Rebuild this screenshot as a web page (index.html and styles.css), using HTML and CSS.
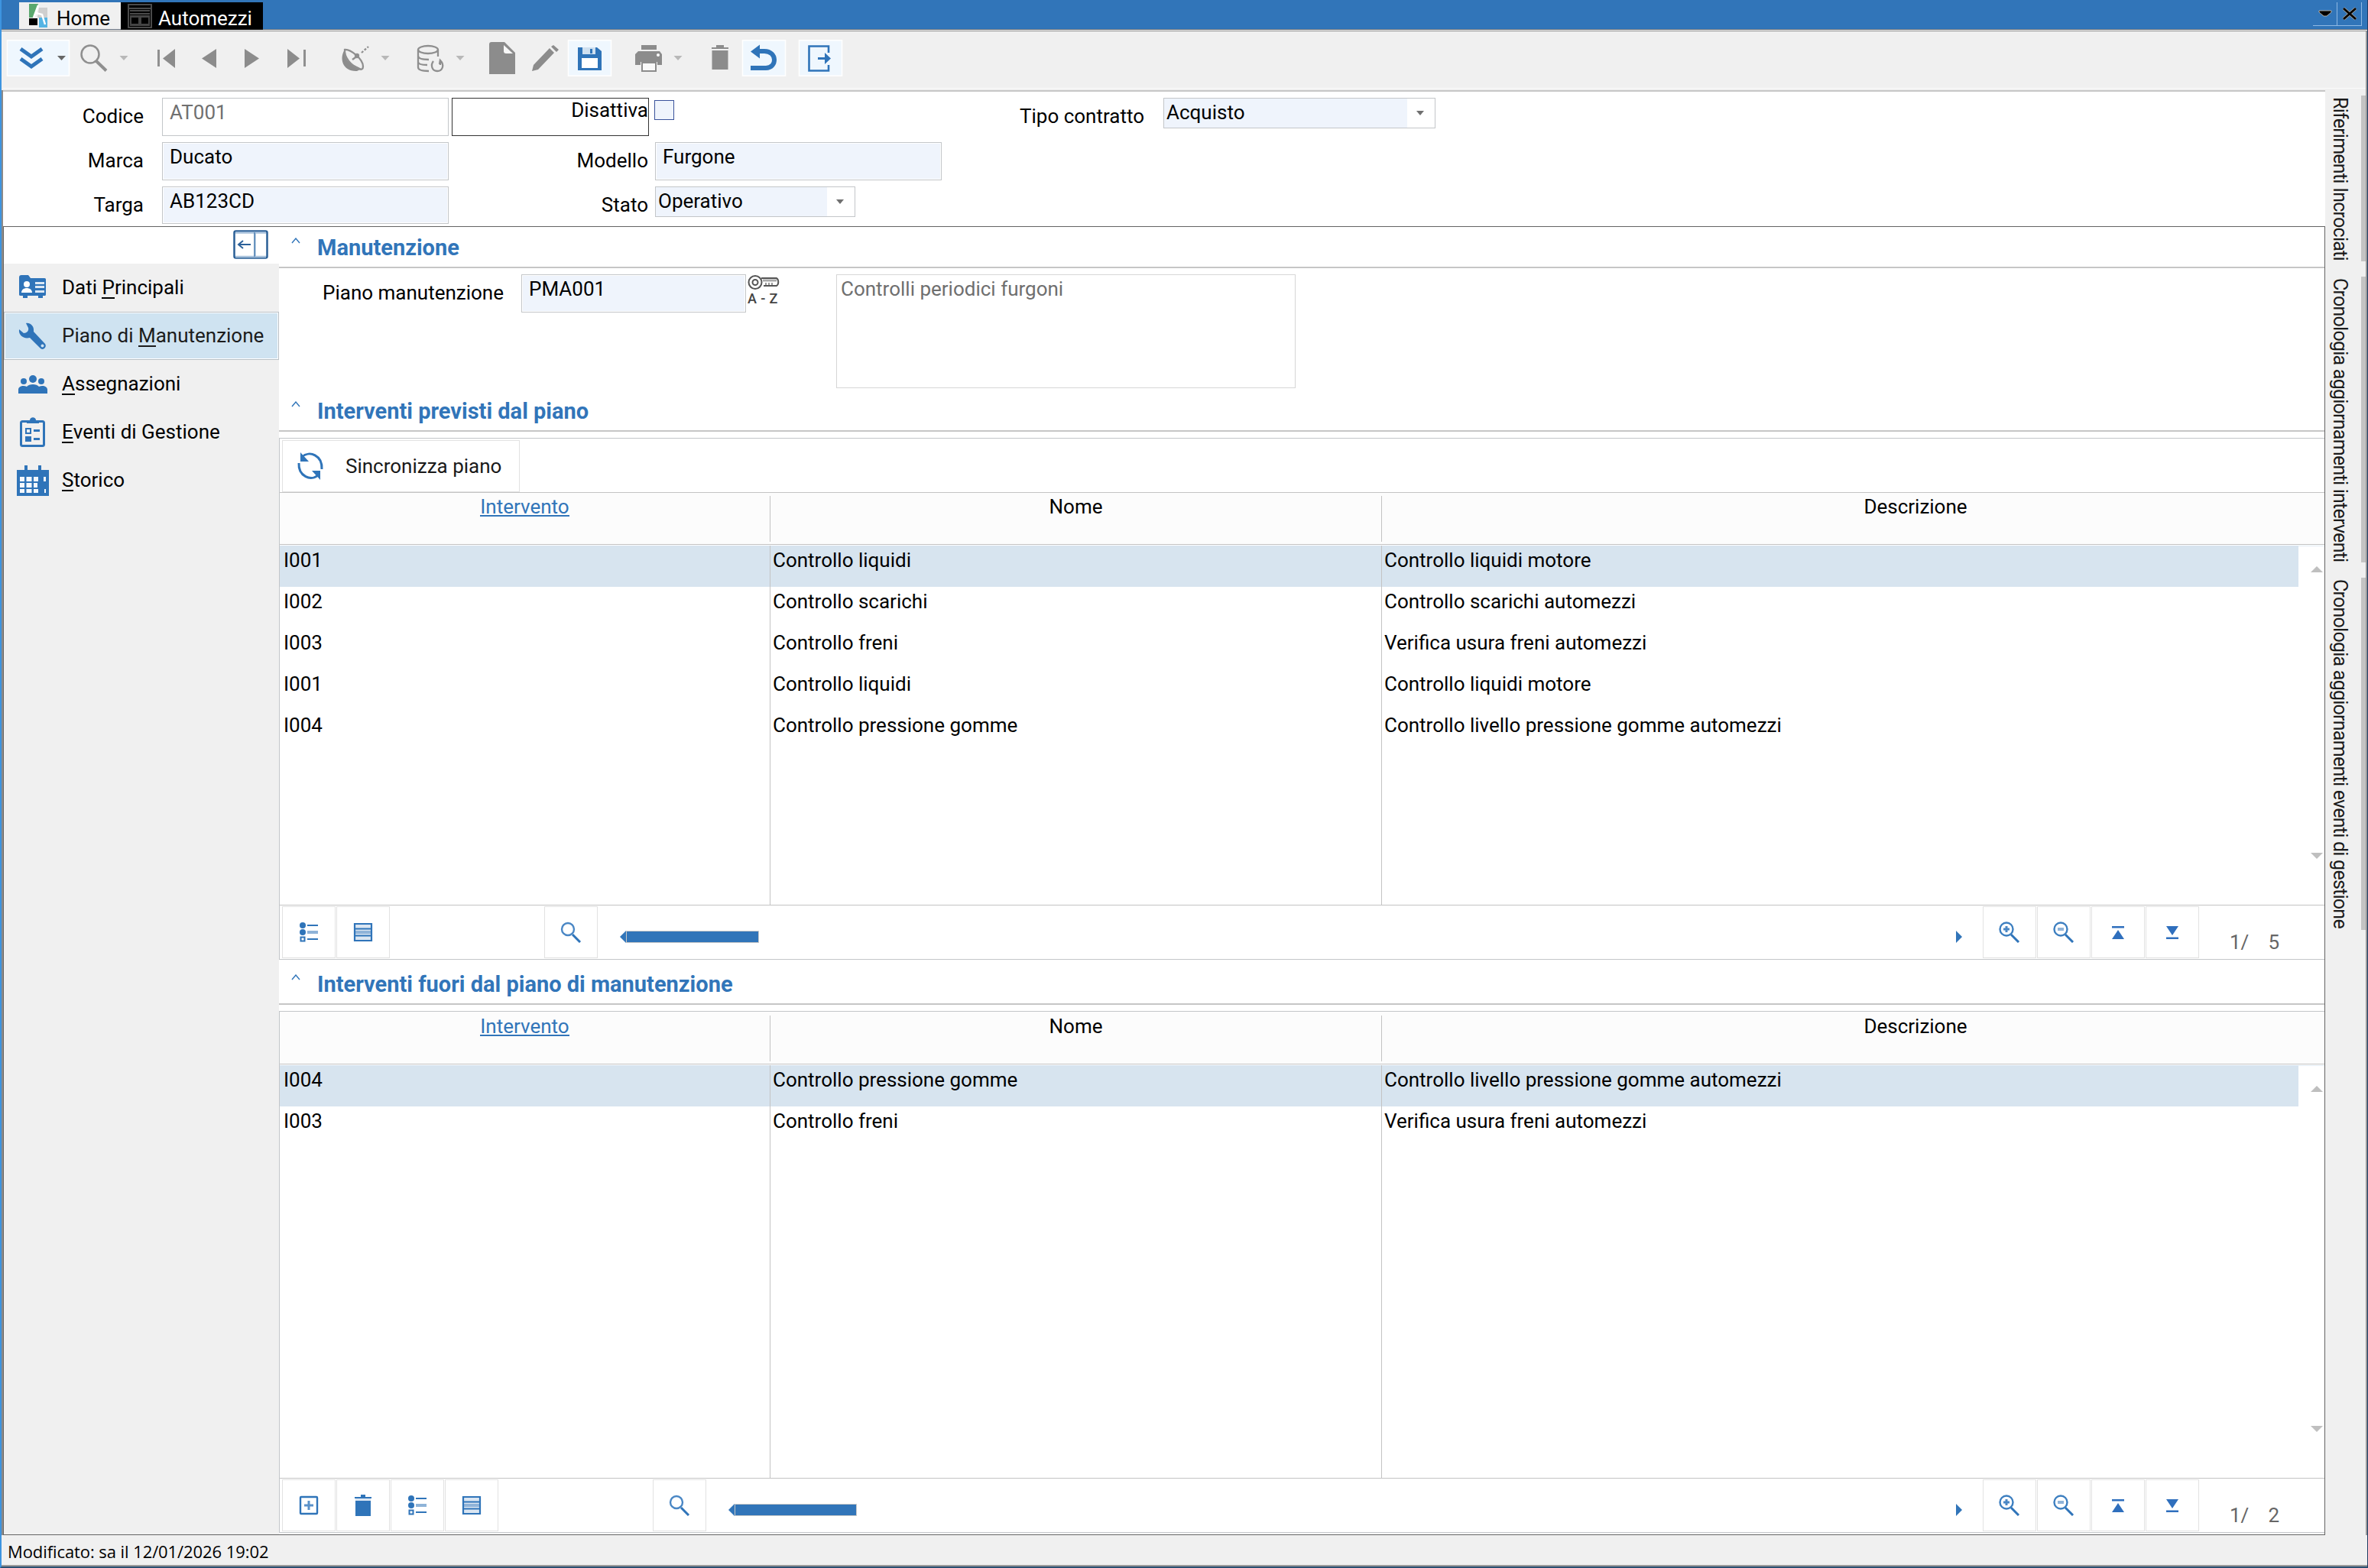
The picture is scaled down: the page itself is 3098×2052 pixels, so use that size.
FILE: index.html
```html
<!DOCTYPE html>
<html lang="it">
<head>
    <meta charset="UTF-8">
    <meta name="viewport" content="width=device-width, initial-scale=1.0">
    <title>Automezzi</title>
    <link rel="stylesheet" href="styles.css">
</head>
<body>
    <!-- Shared icons -->
    <svg class="sprite" width="0" height="0">
        <symbol id="i-list" viewBox="0 0 24 28">
            <g fill="#2f74b9"><circle cx="4" cy="5" r="4"/><circle cx="4" cy="14" r="4"/><path d="M10 4h14v2H10zM10 22h14v2H10z"/></g>
            <path d="M10 12h14v4H10z" fill="#8fb3d8"/>
            <rect x="1.5" y="20.5" width="5" height="5" fill="#fff" stroke="#2f74b9" stroke-width="2"/>
        </symbol>
        <symbol id="i-table" viewBox="0 0 26 26">
            <path d="M2 2h22v22H2z" fill="#dbe6f2"/>
            <path d="M2 11h22v4H2z" fill="#8fb3d8"/>
            <path d="M2 2h22v22H2zM2 8.5h22M2 17.5h22" fill="none" stroke="#2f74b9" stroke-width="2.2"/>
        </symbol>
        <symbol id="i-find" viewBox="0 0 28 28">
            <circle cx="10" cy="10" r="8" fill="none" stroke="#4a87c5" stroke-width="2.4"/>
            <path d="M16 17l10 10" stroke="#2f74b9" stroke-width="3"/>
        </symbol>
        <symbol id="i-zoomin" viewBox="0 0 28 28">
            <circle cx="10" cy="10" r="8.5" fill="none" stroke="#3d7fc0" stroke-width="2.4"/>
            <path d="M16 17l10 10" stroke="#2f74b9" stroke-width="3"/>
            <path d="M6 10h8M10 6v8" stroke="#4a87c5" stroke-width="3"/>
        </symbol>
        <symbol id="i-zoomout" viewBox="0 0 28 28">
            <circle cx="10" cy="10" r="8.5" fill="none" stroke="#3d7fc0" stroke-width="2.4"/>
            <path d="M16 17l10 10" stroke="#2f74b9" stroke-width="3"/>
            <path d="M6 10h8" stroke="#8fb3d8" stroke-width="4"/>
        </symbol>
        <symbol id="i-top" viewBox="0 0 16 17">
            <path d="M0 0h16v2.5H0zM8 5l8 12H0z" fill="#2f6fbd"/>
        </symbol>
        <symbol id="i-bottom" viewBox="0 0 16 17">
            <path d="M0 14.5h16V17H0zM0 0h16L8 12z" fill="#2f6fbd"/>
        </symbol>
        <symbol id="i-caret" viewBox="0 0 12 8">
            <path d="M1 7l5-6 5 6" fill="none" stroke="#2f74b9" stroke-width="1.4"/>
        </symbol>
    </svg>

    <div class="window">
        <!-- Tabs -->
        <div class="titlebar">
            <div class="tab">
                <svg class="tab-logo" width="24" height="31" viewBox="0 0 24 31">
                    <path d="M0 0h12L7 18H0z" fill="#5aa86e"/>
                    <path d="M13 5h11v13H11z" fill="#cfcfcf"/>
                    <path d="M0 19h11v9H0z" fill="#000"/>
                    <path d="M13 18h11v13H13z" fill="#55b4e4"/>
                    <path d="M6 18L12 2M9 12l8 2 4 13" fill="none" stroke="#fff" stroke-width="2.5"/>
                </svg>
                <span>Home</span>
            </div>
            <div class="tab tab-active">
                <svg width="32" height="32" viewBox="0 0 32 32">
                    <path d="M1 1h30v30H1zM1 6h30M3 9h26M3 13h26" fill="none" stroke="#4a4a4a" stroke-width="2"/>
                    <path d="M3 15h26v14H3z" fill="#444"/>
                    <path d="M5 18h9v8H5zM18 18h9v8h-9z" fill="#000"/>
                </svg>
                <span>Automezzi</span>
            </div>
            <div class="window-buttons">
                <span class="window-button">
                    <svg width="18" height="10" viewBox="0 0 18 10"><path d="M1 1h16v2l-6 5H7L1 3z" fill="#000" stroke="#d8c8b0" stroke-width=".8"/></svg>
                </span>
                <span class="window-button">
                    <svg width="20" height="18" viewBox="0 0 20 18"><path d="M2 2l16 14M18 2L2 16" stroke="#b9ab98" stroke-width="4"/><path d="M2 2l16 14M18 2L2 16" stroke="#000" stroke-width="2.8"/></svg>
                </span>
            </div>
        </div>

        <!-- Main toolbar -->
        <div class="toolbar">
            <svg width="1120" height="48" viewBox="0 0 1120 48">
                <g fill="#eff7fe" stroke="#fff" stroke-width="1.5">
                    <path d="M9.5.7h81v46.6h-81zM743.5.7h56v46.6h-56zM971.5.7h56v46.6h-56zM1045.5.7h56v46.6h-56z"/>
                </g>
                <g fill="none" stroke="#2f74b9" stroke-width="5">
                    <path d="M27 12l14 10 14-10M27 25l14 10 14-10"/>
                </g>
                <path d="M75 21h11l-5.500 6z" fill="#666"/>
                <path d="M156.500 21h11l-5.500 6zM498.500 21h11l-5.500 6zM596.500 21h11l-5.500 6zM881.500 21h11l-5.500 6z" fill="#b8b8b8"/>
                <g fill="none" stroke="#8f8f8f" stroke-width="2.5">
                    <circle cx="118" cy="19" r="11.500"/>
                    <path d="M126 28l13 12.500" stroke-width="4"/>
                    <path d="M207.500 13v22M398.500 13v22" stroke-width="3"/>
                </g>
                <g fill="#8c8c8c">
                    <path d="M229 12v25l-16-12.500zM283 12v25l-19-12.500zM320 12v25l19-12.500zM376 12v25l16-12.500z"/>
                    <!-- satellite dish -->
                    <path d="M451 13c-8 12-2 29 16 28l6-3-14-7c-6-4-9-10-8-18z"/>
                </g>
                <g fill="none" stroke="#8f8f8f" stroke-width="2.300">
                    <path d="M451 13c7-1 24 12 24 22 0 3-2 5-5 3-11-4-20-15-19-25z"/>
                    <path d="M461 26l7-5"/>
                    <path d="M473 17l9-8" stroke-dasharray="3 2"/>
                    <circle cx="467" cy="21" r="2" fill="#8f8f8f"/>
                    <!-- database -->
                    <ellipse cx="560" cy="13" rx="13" ry="5"/>
                    <path d="M547 13v23c0 3 5 5 14 5M573 13v9M547 21c0 3 4 5 14 5M547 29c0 3 4 4 12 4"/>
                    <path d="M567 28c-4 5-2 13 5 13s10-8 4-14v6M576 26l-1 6"/>
                </g>
                <!-- new, edit -->
                <path d="M643 3h17l14 14v28h-34V6c0-2 1-3 3-3z" fill="#8c8c8c"/>
                <path d="M659 7l12 11h-9c-2 0-3-1-3-3z" fill="#f8f8f8"/>
                <path d="M696 41l2-8 21-22 6 6-21 22zM721 9l3-2 7 6-3 3z" fill="#8c8c8c"/>
                <!-- save -->
                <path d="M756 10h25l6 5v25h-31z" fill="#2f74b9"/>
                <path d="M762 10h17v9h-17z" fill="#cfe0f0"/><path d="M772 12h3v6h-3z" fill="#2f74b9"/>
                <path d="M761 24h21v13h-21z" fill="#fff"/>
                <!-- print -->
                <path d="M839 7h20v6h-20zM835 15h28l3 4v14h-6v-4h-22v4h-7V19z" fill="#8c8c8c"/>
                <path d="M840 30h18v11h-18z" fill="#fafafa" stroke="#8c8c8c" stroke-width="2"/>
                <circle cx="861" cy="20" r="2" fill="#fff"/>
                <!-- delete -->
                <path d="M931 10h22v2h-22zM937 7h10v3h-10zM931.500 14h21v25h-21z" fill="#8c8c8c"/>
                <!-- undo -->
                <path d="M991 15h9c17 0 17 22 2 22h-20" fill="none" stroke="#2f74b9" stroke-width="6"/>
                <path d="M982 15.500l12-9v18z" fill="#2f74b9"/>
                <!-- exit -->
                <path d="M1084 17V8.500h-25.500v32H1084V33" fill="none" stroke="#2f74b9" stroke-width="2.600"/>
                <path d="M1070 23h9v-6l8 7.500-8 7.500v-6h-9z" fill="#2f74b9"/>
            </svg>
        </div>

        <div class="workspace">
            <div class="document">
                <!-- Vehicle header fields -->
                <div class="form">
                    <div class="form-row">
                        <label class="label-left">Codice</label>
                        <div class="field field-readonly field-code">AT001</div>
                        <div class="focus-label">Disattiva</div>
                        <div class="checkbox"></div>
                        <label class="label-contract">Tipo contratto</label>
                        <div class="select select-contract"><span>Acquisto</span><i></i></div>
                    </div>
                    <div class="form-row">
                        <label class="label-left">Marca</label>
                        <div class="field field-code">Ducato</div>
                        <label class="label-mid">Modello</label>
                        <div class="field field-model">Furgone</div>
                    </div>
                    <div class="form-row">
                        <label class="label-left">Targa</label>
                        <div class="field field-code field-short">AB123CD</div>
                        <label class="label-mid">Stato</label>
                        <div class="select select-state"><span>Operativo</span><i></i></div>
                    </div>
                </div>

                <div class="panes">
                    <!-- Side navigation -->
                    <div class="sidebar">
                        <div class="sidebar-top">
                            <svg width="46" height="38" viewBox="0 0 46 38">
                                <rect x="1.500" y="1.500" width="43" height="35" rx="2" fill="#fff" stroke="#2a5f96" stroke-width="2.500"/>
                                <path d="M3 3.500h40M3 35h40M28.500 3v32" stroke="#a9c2dc" stroke-width="2.500"/>
                                <path d="M28 3v32" stroke="#4f80b3" stroke-width="1.500"/>
                                <path d="M7 19h16M13 14l-6 5 6 5" fill="none" stroke="#2a6099" stroke-width="2"/>
                            </svg>
                        </div>
                        <div class="nav-item">
                            <svg width="44" height="44" viewBox="0 0 44 44">
                                <path d="M4 8c0-2 1-3 3-3h9l3 4h18c2 0 2 1 2 2v19c0 2-1 2-2 2h-2v3h-6v-3H15v3H9v-3H6c-2 0-2-1-2-2z" fill="#2f74b9"/>
                                <circle cx="14" cy="17" r="4" fill="#fff"/><path d="M7 28c0-8 14-8 14 0z" fill="#fff"/>
                                <path d="M25 14h12v3H25zM25 19h12v3H25zM25 25h12v3H25z" fill="#dbe8f4"/>
                            </svg>
                            <span>Dati <u>P</u>rincipali</span>
                        </div>
                        <div class="nav-item nav-selected">
                            <svg width="44" height="44" viewBox="0 0 44 44">
                                <path d="M13 5c5-1 11 3 10 11l15 16c3 4-3 10-7 5L18 24C10 26 3 21 4 13l6 5c4 0 7-3 6-7z" fill="#2f74b9"/>
                                <circle cx="34.500" cy="34.500" r="2" fill="#cfe3f1"/>
                            </svg>
                            <span>Piano di <u>M</u>anutenzione</span>
                        </div>
                        <div class="nav-item">
                            <svg width="44" height="44" viewBox="0 0 44 44">
                                <g fill="#2f74b9"><circle cx="10" cy="18" r="4"/><circle cx="22" cy="15" r="5"/><circle cx="33" cy="18" r="4"/><path d="M3 34v-5c0-5 7-6 11-4 3-4 13-4 16 0 4-2 11-1 11 4v5z"/></g>
                            </svg>
                            <span><u>A</u>ssegnazioni</span>
                        </div>
                        <div class="nav-item">
                            <svg width="44" height="44" viewBox="0 0 44 44">
                                <rect x="6.500" y="7.500" width="30" height="32" rx="2" fill="none" stroke="#2f74b9" stroke-width="3"/>
                                <path d="M14 10V6h4c0-5 8-5 8 0h4v4z" fill="#2f74b9"/>
                                <path d="M13 17h6v6h-6z" fill="none" stroke="#2f74b9" stroke-width="2"/>
                                <path d="M12 27h8v7h-8zM23 18h8v3h-8zM23 29h8v3h-8z" fill="#2f74b9"/>
                            </svg>
                            <span><u>E</u>venti di Gestione</span>
                        </div>
                        <div class="nav-item">
                            <svg width="44" height="44" viewBox="0 0 44 44">
                                <path d="M1 8h42v34H1z" fill="#2f74b9"/>
                                <path d="M11 2h4v6h-4zM29 2h4v6h-4z" fill="#2f74b9"/>
                                <path d="M5 17h6v6H5zM13.500 17h7v6h-7zM23 17h6v6h-6zM5 25h6v6H5zM13.500 25h7v6h-7zM23 25h5v6h-5zM5 33h6v5H5zM13.500 33h7v5h-7zM23 33h6v5h-6zM36 17h3v6h-3zM37 33h2v5h-2z" fill="#f4f8fc"/>
                            </svg>
                            <span><u>S</u>torico</span>
                        </div>
                    </div>

                    <div class="content">
                        <div class="section-title">
                            <svg width="12" height="8"><use href="#i-caret"/></svg>
                            <h2>Manutenzione</h2>
                        </div>
                        <div class="plan">
                            <label>Piano manutenzione</label>
                            <div class="field field-plan">PMA001</div>
                            <div class="key">
                                <svg width="42" height="21" viewBox="0 0 42 21">
                                    <circle cx="10" cy="10.500" r="8.500" fill="none" stroke="#555" stroke-width="2"/>
                                    <circle cx="10" cy="10.500" r="3.500" fill="none" stroke="#555" stroke-width="2"/>
                                    <path d="M18 5h20c3 2 3 8 0 10H21" fill="none" stroke="#555" stroke-width="2"/>
                                    <path d="M20 8h18" stroke="#aaa" stroke-width="3"/>
                                    <path d="M24 14v-3M28 14v-3M32 14v-3" stroke="#777" stroke-width="1.500"/>
                                </svg>
                                <span>A - Z</span>
                            </div>
                            <div class="plan-note">Controlli periodici furgoni</div>
                        </div>

                        <div class="section-title">
                            <svg width="12" height="8"><use href="#i-caret"/></svg>
                            <h2>Interventi previsti dal piano</h2>
                        </div>
                        <div class="grid">
                            <div class="grid-actions">
                                <div class="sync">
                                    <svg width="36" height="38" viewBox="0 0 36 38">
                                        <path d="M7 7C17-2 34 5 33 23M29 30C19 40 2 32 3 15" fill="none" stroke="#2f74b9" stroke-width="3"/>
                                        <path d="M5 1v12h11zM31 37V25H20z" fill="#2f74b9"/>
                                    </svg>
                                    <span>Sincronizza piano</span>
                                </div>
                            </div>
                            <div class="grid-head">
                                <div class="col-code"><span>Intervento</span></div>
                                <div class="col-name"><span>Nome</span></div>
                                <div class="col-desc"><span>Descrizione</span></div>
                            </div>
                            <div class="grid-body">
                                <div class="rows">
                                    <div class="row row-selected"><div>I001</div><div>Controllo liquidi</div><div>Controllo liquidi motore</div></div>
                                    <div class="row"><div>I002</div><div>Controllo scarichi</div><div>Controllo scarichi automezzi</div></div>
                                    <div class="row"><div>I003</div><div>Controllo freni</div><div>Verifica usura freni automezzi</div></div>
                                    <div class="row"><div>I001</div><div>Controllo liquidi</div><div>Controllo liquidi motore</div></div>
                                    <div class="row"><div>I004</div><div>Controllo pressione gomme</div><div>Controllo livello pressione gomme automezzi</div></div>
                                    <div class="row row-fill"><div></div><div></div><div></div></div>
                                </div>
                                <div class="scroll-v"><i class="up"></i><i class="down"></i></div>
                            </div>
                            <div class="grid-foot">
                                <div class="button"><svg width="24" height="28"><use href="#i-list"/></svg></div>
                                <div class="button"><svg width="26" height="26"><use href="#i-table"/></svg></div>
                                <div class="button button-find"><svg width="28" height="28"><use href="#i-find"/></svg></div>
                                <div class="scroll-h"><i class="left"></i><b class="thumb-long"></b><i class="right"></i></div>
                                <div class="button"><svg width="28" height="28"><use href="#i-zoomin"/></svg></div>
                                <div class="button"><svg width="28" height="28"><use href="#i-zoomout"/></svg></div>
                                <div class="button"><svg width="16" height="17"><use href="#i-top"/></svg></div>
                                <div class="button"><svg width="16" height="17"><use href="#i-bottom"/></svg></div>
                                <div class="counter"><span>1/</span><span>5</span></div>
                            </div>
                        </div>

                        <div class="section-title section-last">
                            <svg width="12" height="8"><use href="#i-caret"/></svg>
                            <h2>Interventi fuori dal piano di manutenzione</h2>
                        </div>
                        <div class="grid">
                            <div class="grid-head grid-head-tall">
                                <div class="col-code"><span>Intervento</span></div>
                                <div class="col-name"><span>Nome</span></div>
                                <div class="col-desc"><span>Descrizione</span></div>
                            </div>
                            <div class="grid-body">
                                <div class="rows">
                                    <div class="row row-selected"><div>I004</div><div>Controllo pressione gomme</div><div>Controllo livello pressione gomme automezzi</div></div>
                                    <div class="row"><div>I003</div><div>Controllo freni</div><div>Verifica usura freni automezzi</div></div>
                                    <div class="row row-fill"><div></div><div></div><div></div></div>
                                </div>
                                <div class="scroll-v"><i class="up"></i><i class="down"></i></div>
                            </div>
                            <div class="grid-foot">
                                <div class="button">
                                    <svg width="26" height="26" viewBox="0 0 26 26"><rect x="2" y="2" width="22" height="22" rx="1" fill="none" stroke="#2f74b9" stroke-width="2.400"/><path d="M7 13h12M13 7v12" stroke="#5b92ca" stroke-width="3"/></svg>
                                </div>
                                <div class="button">
                                    <svg width="22" height="28" viewBox="0 0 22 28"><path d="M0 3h22v2H0zM8 0h6v3H8zM1 8h20v20H1z" fill="#2f74b9"/><path d="M1 5h20v3H1z" fill="#dbe6f2"/></svg>
                                </div>
                                <div class="button"><svg width="24" height="28"><use href="#i-list"/></svg></div>
                                <div class="button"><svg width="26" height="26"><use href="#i-table"/></svg></div>
                                <div class="button button-find"><svg width="28" height="28"><use href="#i-find"/></svg></div>
                                <div class="scroll-h"><i class="left"></i><b class="thumb-short"></b><i class="right"></i></div>
                                <div class="button"><svg width="28" height="28"><use href="#i-zoomin"/></svg></div>
                                <div class="button"><svg width="28" height="28"><use href="#i-zoomout"/></svg></div>
                                <div class="button"><svg width="16" height="17"><use href="#i-top"/></svg></div>
                                <div class="button"><svg width="16" height="17"><use href="#i-bottom"/></svg></div>
                                <div class="counter"><span>1/</span><span>2</span></div>
                            </div>
                        </div>
                    </div>
                </div>
            </div>

            <!-- Collapsed panels on the right -->
            <div class="dock">
                <div class="dock-tab dock-refs"><span>Riferimenti Incrociati</span></div>
                <div class="dock-tab dock-jobs"><span>Cronologia aggiornamenti interventi</span></div>
                <div class="dock-tab dock-events"><span>Cronologia aggiornamenti eventi di gestione</span></div>
            </div>
        </div>

        <div class="statusbar"><span>Modificato: sa il 12/01/2026 19:02</span></div>
    </div>
</body>
</html>
```
FILE: styles.css
```css
/* Base styles */
* {
    box-sizing: border-box;
}

body {
    margin: 0;
    font-family: Roboto, sans-serif;
    font-size: 26px;
    line-height: 30px;
    color: #000;
    background: #f0f0f0;
    white-space: nowrap;
}

svg {
    display: block;
    flex: none;
}

.sprite {
    position: absolute;
}

.window {
    display: flex;
    flex-direction: column;
    width: 3098px;
    height: 2052px;
    overflow: hidden;
    border-left: 2px solid #3d94e0;
    border-right: 1px solid #1f3b63;
    border-bottom: 2px solid #2b4f70;
}

/* Title bar and tabs */
.titlebar {
    display: flex;
    height: 41px;
    padding: 3px 7px 0 23px;
    background: #3175b9;
    border-bottom: 1px solid #8b8b8b;
    box-shadow: inset 0 -1px #fff, inset 0 -2px #5f6a78;
}

.tab {
    display: flex;
    align-items: flex-start;
    width: 133px;
    height: 35px;
    padding: 2px 0 0 13px;
    background: #f0f0f0;
}

.tab span {
    margin: 4px 0 0 12px;
}

.tab-active {
    width: 186px;
    height: 36px;
    padding-left: 9px;
    color: #fff;
    background: #000;
}

.tab-active span {
    margin-left: 8px;
}

.window-buttons {
    display: flex;
    height: 31px;
    margin-left: auto;
    border-bottom: 1px solid #8fb9e3;
}

.window-button {
    display: flex;
    align-items: center;
    justify-content: center;
    width: 32px;
    border-right: 1px solid #8fb9e3;
}

/* Main toolbar */
.toolbar {
    height: 77px;
    padding-top: 11px;
    margin-left: -2px;
    background: #f0f0f0;
    border-left: 4px solid transparent;
    border-right: 2px solid #9a9a9a;
    box-shadow: inset 0 -2px #f0f0f0, inset 0 -3px #fafafa;
}

.toolbar svg {
    margin-left: -4px;
}

/* Document area */
.workspace {
    display: flex;
    height: 1891px;
    border-left: 2px solid #8a8a8a;
}

.document {
    display: flex;
    flex-direction: column;
    width: 3038px;
    background: #fff;
    border-top: 2px solid #c6c6c6;
}

/* Header form */
.form {
    height: 176px;
    padding-top: 8px;
}

.form-row {
    display: flex;
    align-items: flex-start;
    height: 58px;
}

.form label {
    margin-top: 9px;
    text-align: right;
}

.form .label-left {
    width: 184px;
    margin-right: 24px;
}

.form .label-mid {
    width: 257px;
    margin: 9px 9px 0 4px;
}

.form .label-contract {
    width: 615px;
    margin-right: 25px;
}

.field {
    height: 50px;
    padding: 3px 9px;
    background: #eff4fc;
    border: 1px solid #c3c6c9;
    box-shadow: inset 0 0 0 1px #fff;
}

.field-readonly {
    color: #707070;
    background: #fff;
}

.field-code {
    width: 375px;
}

.field-short {
    height: 49px;
}

.field-model {
    width: 375px;
}

.focus-label {
    width: 258px;
    height: 50px;
    margin: 0 7px 0 4px;
    padding-top: 2px;
    line-height: 26px;
    text-align: right;
    border: 1px solid #333;
}

.checkbox {
    width: 26px;
    height: 26px;
    margin-top: 3px;
    background: #eff4fc;
    border: 1px solid #3a539b;
}

.select {
    display: flex;
    height: 40px;
    background: #eff4fc;
    border: 1px solid #c3c6c9;
}

.select span {
    flex: 1;
    padding: 3px 0 0 3px;
}

.select i {
    display: flex;
    align-items: center;
    justify-content: center;
    width: 36px;
    padding-right: 3px;
    background: #fff;
}

.select i::after {
    content: '';
    border: 5.5px solid transparent;
    border-top: 6px solid #707070;
    border-bottom: 0;
}

.select-contract {
    width: 356px;
}

.select-state {
    width: 262px;
}

/* Split panes */
.panes {
    display: flex;
    height: 1713px;
    border: 1px solid #646464;
}

/* Side navigation */
.sidebar {
    width: 360px;
    background: #f0f0f0;
}

.sidebar-top {
    display: flex;
    justify-content: flex-end;
    height: 48px;
    padding: 4px 14px;
    background: #fff;
}

.nav-item {
    display: flex;
    align-items: center;
    height: 63px;
    padding-left: 15px;
    border: 1px solid transparent;
}

.nav-item span {
    margin: 0 0 1px 16px;
}

.nav-item u {
    text-decoration: none;
    border-bottom: 2px solid currentColor;
    display: inline-block;
    line-height: 26px;
}

.nav-selected {
    color: #1c1c1c;
    background: #cfe3f1;
    border-color: #b9c0c6;
    box-shadow: inset 0 0 0 1px #fff;
}

/* Content sections */
.content {
    flex: 1;
    min-width: 0;
}

.section-title {
    display: flex;
    align-items: flex-start;
    height: 54px;
    padding: 14px 0 0 16px;
    border-bottom: 2px solid #c6c6c6;
}

.section-title h2 {
    margin: -2px 0 0 22px;
    font-size: 29px;
    font-weight: 700;
    color: #3175b9;
}

.section-last {
    margin-top: 5px;
}

.plan {
    display: flex;
    align-items: flex-start;
    height: 160px;
    padding-top: 8px;
}

.plan label {
    width: 294px;
    margin: 9px 23px 0 0;
    text-align: right;
}

.field-plan {
    width: 294px;
}

.key {
    width: 118px;
    padding-left: 2px;
    font-size: 18px;
    font-weight: 500;
    line-height: 22px;
    letter-spacing: 0.4px;
    color: #444;
}

.plan-note {
    width: 601px;
    height: 149px;
    padding: 3px 5px;
    color: #6f6f6f;
    border: 1px solid #d6d6d6;
}

/* Data grids */
.grid {
    display: flex;
    flex-direction: column;
    height: 683px;
    margin-top: 8px;
    border: 1px solid #c3c6c9;
    border-right: 0;
}

.grid-actions {
    height: 71px;
    padding: 2px 0 0 3px;
    border-bottom: 1px solid #c3c3c3;
}

.sync {
    display: flex;
    align-items: center;
    width: 311px;
    height: 68px;
    padding-left: 18px;
    color: #1a1a1a;
    border: 1px solid #e2e2e2;
}

.sync span {
    margin-left: 28px;
}

.grid-head {
    display: flex;
    height: 68px;
    padding: 4px 0 3px;
    overflow: hidden;
    text-align: center;
    background: #fcfcfc;
    border-bottom: 1px solid #c3c3c3;
}

.grid-head-tall {
    height: 69px;
    padding-top: 5px;
}

.grid-head > div {
    flex: none;
    line-height: 28px;
    border-right: 1px solid #c3c3c3;
}

.col-code {
    width: 642px;
}

.col-name {
    width: 800px;
}

.grid-head .col-desc {
    width: 1396px;
    border-right: 0;
}

.col-code span {
    display: inline-block;
    height: 27px;
    color: #3175b9;
    border-bottom: 2px solid #3175b9;
}

.grid-body {
    display: flex;
    flex: 1;
    padding-top: 1px;
    border-bottom: 1px solid #c3c3c3;
}

.rows {
    display: flex;
    flex-direction: column;
    width: 2641px;
}

.row {
    display: flex;
    height: 54px;
}

.row > div {
    padding: 4px 0 0 4px;
    border-right: 1px solid #c3c3c3;
}

.row > div:nth-child(1) {
    width: 642px;
    padding-left: 5px;
}

.row > div:nth-child(2) {
    width: 800px;
    padding-left: 3px;
}

.row > div:nth-child(3) {
    flex: 1;
    padding-left: 3px;
    border-right: 0;
}

.row-selected {
    background: #d7e4ef;
}

.row-fill {
    flex: 1;
}

.scroll-v {
    display: flex;
    flex: 1;
    flex-direction: column;
    align-items: flex-end;
    justify-content: space-between;
    padding: 26px 2px 60px 0;
    border-top: 1px solid #e3ecf4;
}

.scroll-v i {
    border: 8px solid transparent;
}

.scroll-v .up {
    border-top: 0;
    border-bottom-color: #bfbfbf;
}

.scroll-v .down {
    border-bottom: 0;
    border-top-color: #bfbfbf;
}

/* Grid footer */
.grid-foot {
    display: flex;
    align-items: flex-start;
    gap: 1px;
    height: 70px;
    padding: 1px 0 0 3px;
}

.button {
    display: flex;
    align-items: center;
    justify-content: center;
    width: 70px;
    height: 68px;
    border: 1px solid #e2e2e2;
}

.button-find {
    margin-left: 201px;
}

.scroll-h {
    display: flex;
    flex: 1;
    align-items: center;
    height: 68px;
    padding: 12px 26px 0 28px;
}

.scroll-h i {
    border: 8px solid transparent;
}

.scroll-h .left {
    border-left: 0;
    border-right-color: #3175b9;
}

.scroll-h .right {
    margin-left: auto;
    border-right: 0;
    border-left-color: #3175b9;
}

.scroll-h b {
    height: 16px;
    background: #3175b9;
    border: 1px solid #c8c8c8;
}

.thumb-long {
    width: 174px;
}

.thumb-short {
    width: 160px;
}

.counter {
    display: flex;
    justify-content: space-between;
    width: 163px;
    padding: 32px 59px 0 39px;
    color: #666;
}

/* Right dock */
.dock {
    display: flex;
    flex: 1;
    flex-direction: column;
    align-items: stretch;
    gap: 20px;
    padding-top: 7px;
    background: #f0f0f0;
    border-right: 2px solid #9a9a9a;
}

.dock-tab {
    display: flex;
    padding: 2px 0 0 4px;
    font-size: 25px;
    letter-spacing: -0.75px;
    color: #1a1a1a;
    border-right: 6px solid #c3c3c3;
}

.dock-tab span {
    writing-mode: vertical-rl;
    line-height: 30px;
}

.dock-refs {
    height: 217px;
}

.dock-jobs {
    height: 374px;
}

.dock-events {
    height: 461px;
}

/* Status bar */
.statusbar {
    height: 41px;
    padding: 6px 0 0 8px;
    font-family: "Open Sans", sans-serif;
    font-size: 22px;
    letter-spacing: -0.08px;
    background: #f0f0f0;
    border-bottom: 2px solid #9a9a9a;
}
```
